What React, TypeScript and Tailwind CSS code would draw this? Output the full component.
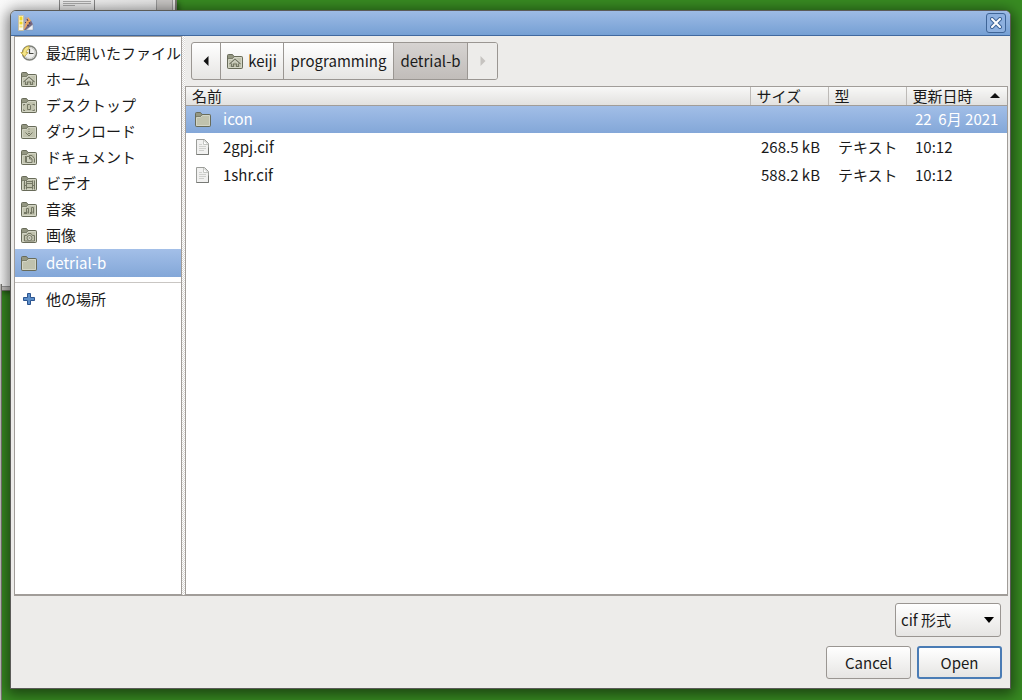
import type { ReactNode } from "react";

const btnCls =
  "flex items-center justify-center rounded-[3px] border border-[#9a9692] bg-linear-to-b from-white to-[#e6e5e3]";

const headCls =
  "border-b border-[#a19d99] bg-linear-to-b from-[#f8f8f7] to-[#e2e1df] p-0 text-left font-normal";

function Folder({ children }: { children?: ReactNode }) {
  return (
    <svg width="18" height="18" viewBox="0 0 18 18" fill="none" className="shrink-0">
      <path
        d="M1.5 15.5v-12a1 1 0 0 1 1-1h4l1.5 2h7.5a1 1 0 0 1 1 1v10a1 1 0 0 1-1 1h-13a1 1 0 0 1-1-1z"
        fill="#949782"
        stroke="#686b59"
      />
      <path d="M2.5 15.5v-8h4l2-2h7v10z" fill="#c0c2ad" stroke="#d3d5c5" />
      <path d="M2 6.5h4.5l1.5-2" stroke="#7b7e6a" />
      {children}
    </svg>
  );
}

const line = { stroke: "#747764", strokeWidth: 1 };

function HomeFolder() {
  return (
    <Folder>
      <path d="m4 12 5-5 5 5" stroke="#dfe0d4" strokeWidth="2.5" />
      <path d="m3.5 12 5.5-5 5.5 5M5.5 11.5v3h2v-2.5h3v2.5h2v-3" {...line} strokeWidth="1.2" />
    </Folder>
  );
}

function Clock() {
  return (
    <svg width="18" height="18" viewBox="0 0 18 18" fill="none" className="shrink-0">
      <circle cx="9.5" cy="9" r="7" fill="#f0f0ee" stroke="#7e807a" strokeWidth="1.5" />
      <circle cx="9.5" cy="9" r="5.5" stroke="#cbccc7" />
      <path d="M9.5 5v4.5h4" stroke="#454741" strokeWidth="1.2" />
      <path
        d="M.8 8.5l3.7 4L8 8.500H6.2C6.2 7 7 5.800 9 5V2C5.500 2.500 3 5 2.800 8.500z"
        fill="#f5e588"
        stroke="#b7a03a"
        strokeWidth="0.8"
      />
    </svg>
  );
}

function Plus() {
  return (
    <svg width="18" height="18" viewBox="0 0 18 18" className="shrink-0">
      <path
        d="M7.5 3.5h3v4h4v3h-4v4h-3v-4h-4v-3h4z"
        fill="#5d8fc9"
        stroke="#2c5590"
        strokeLinejoin="round"
      />
    </svg>
  );
}

function TextFile() {
  return (
    <svg width="18" height="18" viewBox="0 0 18 18" fill="none" className="shrink-0">
      <path d="M2.5 1.5h8l4 4v11h-12z" fill="#f1f1f0" stroke="#9b9d99" strokeLinejoin="round" />
      <path d="M2.5 16.500h12v-7" stroke="#777975" />
      <path d="M9.5 2v4.5H14z" fill="#fff" stroke="#c4c6c2" />
      <path d="M5 6.5h3M5 8.500h7M5 10.500h7M5 12.500h5" stroke="#cfd0cd" />
    </svg>
  );
}

function AppIcon() {
  return (
    <svg width="18" height="18" viewBox="0 0 18 18">
      <path d="M6 16 8 3l3.5 1L7 16z" fill="#a9a2b5" />
      <path d="m6.5 16 4.5-13 3 3.500L8 16z" fill="#eda65c" />
      <path d="m7 16 7-9.500 2 4L9 16z" fill="#77677f" />
      <path d="m9 16 7-5.500V16z" fill="#f1f2f5" stroke="#8891a0" strokeWidth="0.5" />
      <path d="M1.5 1.5h5v15h-5z" fill="#fbf9ee" stroke="#c9c0a2" />
      <path d="M2.5 2.500h3v4h-3zM2.500 7.500h3v3h-3z" fill="#f2d726" />
      <path d="M2.5 11.500h3v2h-3z" fill="#f5e27a" />
      <path d="m10 5 1 2M8 8l1 1M12 8l1 2M10 11l2 1" stroke="#4a3a52" />
    </svg>
  );
}

const places = [
  { name: "最近開いたファイル", icon: <Clock /> },
  { name: "ホーム", icon: <HomeFolder /> },
  {
    name: "デスクトップ",
    icon: (
      <Folder>
        <path
          d="M3.5 9.5v-1H5M12.5 8.500h2v1M3.500 13.500v1H5M12.500 14.500h2v-1M7.500 8.500h2l1 1v4h-3z"
          {...line}
        />
      </Folder>
    ),
  },
  {
    name: "ダウンロード",
    icon: (
      <Folder>
        <path d="M8.5 7h1M8.500 9.500h1M5.500 10.500 9 14l3.500-3.500M8 11l1 1 1-1" {...line} />
      </Folder>
    ),
  },
  {
    name: "ドキュメント",
    icon: (
      <Folder>
        <path d="M5.5 14.500v-6.500M9 7.500h3l2.500 3v4" {...line} />
        <path d="M6.5 8.500h3l2.500 2.500v3.500H6.500zM9.500 8.500v2.500H12" fill="#d0d2c1" {...line} />
      </Folder>
    ),
  },
  {
    name: "ビデオ",
    icon: (
      <Folder>
        <path d="M4.5 6.500v9M14.500 6.500v9M6.500 6.500v9M12.500 6.500v9" {...line} />
        <path d="M6.5 7.500h6M6.500 9.500h6M6.500 13.500h6M4.500 11.500h2M12.500 11.500h2" {...line} />
      </Folder>
    ),
  },
  {
    name: "音楽",
    icon: (
      <Folder>
        <path d="M6.5 13V8.500h2V12M11.500 13V7.500h2V12" {...line} />
        <path d="M4 12h3v2H4zM7.500 11.500h1.500v2H7.500zM10 12h2v2h-2zM12.500 11.500H14v2h-1.500z" fill="#747764" />
      </Folder>
    ),
  },
  {
    name: "画像",
    icon: (
      <Folder>
        <path d="M4.5 9.500h2l1.500-2h3l1.500 2h2v5.500h-10z" {...line} />
        <circle cx="9.5" cy="12" r="2.500" fill="#d9dacd" {...line} />
        <circle cx="9.5" cy="12" r="1" fill="#9fa28d" />
      </Folder>
    ),
  },
];

const files = [
  { name: "icon", size: "", type: "", date: "22  6月 2021", folder: true },
  { name: "2gpj.cif", size: "268.5 kB", type: "テキスト", date: "10:12", folder: false },
  { name: "1shr.cif", size: "588.2 kB", type: "テキスト", date: "10:12", folder: false },
];

function Place({ name, icon }: { name: string; icon: ReactNode }) {
  return (
    <button className="flex h-[26px] w-full items-center gap-2 overflow-hidden pl-[5px] whitespace-nowrap">
      {icon}
      {name}
    </button>
  );
}

function Sidebar() {
  return (
    <nav className="w-[168px] shrink-0 border border-[#a19d99] bg-white pt-[3px]">
      {places.map((p) => (
        <Place key={p.name} {...p} />
      ))}
      <button className="mt-px flex h-7 w-full items-center gap-2 bg-linear-to-b from-[#a3bfe8] to-[#83a7d8] pl-[5px] text-white">
        <Folder />
        detrial-b
      </button>
      <hr className="mt-[5px] mb-[3px] border-[#c9c6c3]" />
      <Place name="他の場所" icon={<Plus />} />
    </nav>
  );
}

function PathBar() {
  const seg = "flex items-center justify-center border-l border-[#9a9692]";
  return (
    <div className="my-[6px] ml-[6px] flex h-[38px] w-fit overflow-hidden rounded-[3px] border border-[#9a9692] bg-linear-to-b from-white to-[#e6e5e3]">
      <button aria-label="Back" className="flex w-[28px] items-center justify-center">
        <svg width="6" height="10" viewBox="0 0 6 10">
          <path d="M5.5 0v10l-5-5z" fill="#111" />
        </svg>
      </button>
      <button className={`${seg} w-[63px] gap-1 pr-px`}>
        <HomeFolder />
        keiji
      </button>
      <button className={`${seg} w-[110px]`}>programming</button>
      <button className={`${seg} w-[74px] bg-linear-to-b from-[#d6d3d1] to-[#c1bdba]`}>
        detrial-b
      </button>
      <button aria-label="Forward" disabled className={`${seg} w-[30px] bg-[#edecea]`}>
        <svg width="6" height="10" viewBox="0 0 6 10">
          <path d="M.5 0v10l5-5z" fill="#c6c3c0" />
        </svg>
      </button>
    </div>
  );
}

function FileTable() {
  return (
    <div className="flex-1 border border-[#a19d99] bg-white">
      <table className="w-full table-fixed border-collapse">
        <colgroup>
          <col />
          <col className="w-[78px]" />
          <col className="w-[78px]" />
          <col className="w-[101px]" />
        </colgroup>
        <thead>
          <tr className="h-[18px] leading-[17px]">
            <th className={`${headCls} pl-[6px]`}>名前</th>
            <th className={`${headCls} border-l border-l-[#bdbab7] pl-[6px]`}>サイズ</th>
            <th className={`${headCls} border-l border-l-[#bdbab7] pl-[6px]`}>型</th>
            <th className={`${headCls} border-l border-l-[#bdbab7] pl-[6px]`}>
              <div className="flex items-center justify-between pr-[7px]">
                更新日時
                <svg width="10" height="5" viewBox="0 0 10 5">
                  <path d="M0 5h10L5 0z" fill="#111" />
                </svg>
              </div>
            </th>
          </tr>
        </thead>
        <tbody>
          {files.map((f) => (
            <tr
              key={f.name}
              className={`h-7 whitespace-pre ${f.folder ? "bg-linear-to-b from-[#a3bfe8] to-[#83a7d8] text-white" : ""}`}
            >
              <td className="p-0 pl-2">
                <div className="flex items-center gap-[11px]">
                  {f.folder ? <Folder /> : <TextFile />}
                  {f.name}
                </div>
              </td>
              <td className="p-0 pr-[8px] text-right">{f.size}</td>
              <td className="p-0 pl-[10px]">{f.type}</td>
              <td className="p-0 pl-[9px]">{f.date}</td>
            </tr>
          ))}
        </tbody>
      </table>
    </div>
  );
}

// Edges of the windows that lie behind the dialog.
function BackWindows() {
  return (
    <>
      <div className="absolute top-0 left-0 h-[291px] w-[177px] border-r-2 border-b border-[#77766f] bg-linear-to-r from-[#fafafa] to-[#e2e2e2] shadow-[2px_2px_5px_rgba(0,0,0,0.4)]">
        <div className="ml-[59px] flex h-3 w-[36px] flex-col gap-px border-x border-[#888] bg-[#eee] px-[3px] pt-px">
          <div className="h-px bg-[#aaa]" />
          <div className="h-px bg-[#aaa]" />
          <div className="h-px w-3 bg-[#aaa]" />
        </div>
        <div className="absolute top-0 right-[2px] h-3 w-[17px] border-x border-[#999] bg-[#c8c6c4]" />
        <div className="absolute bottom-0 left-0 h-[4px] w-3 border-t border-[#999] bg-[#c8c6c4]" />
      </div>
      <div className="absolute top-[284px] bottom-0 left-0 w-[2px] border-r border-[#77766f] bg-[#c4c2c0]" />
    </>
  );
}

export default function App() {
  return (
    <div className="relative flex min-h-screen bg-[#388b22] pt-[10px] pr-[11px] pb-[11px] pl-[10px] font-['Noto_Sans_CJK_JP','Noto_Sans',sans-serif] text-[15px] leading-5 text-[#1a1a1a]">
      <BackWindows />
      <div className="relative flex flex-1 flex-col rounded-t-[6px] border border-[#5b5b58] bg-[#edecea] shadow-[0_3px_14px_3px_rgba(0,0,0,0.5)]">
        <header className="flex h-[25px] items-center justify-between rounded-t-[5px] border-b border-[#41699f] bg-linear-to-b from-[#9dbbe5] to-[#76a0d4] pr-[4px] pl-[6px]">
          <AppIcon />
          <button
            aria-label="Close"
            className="flex size-5 items-center justify-center rounded-[3px] border border-[#3f6597] bg-[#8db0df]"
          >
            <svg width="12" height="12" viewBox="0 0 12 12">
              <path d="m2 2 8 8M10 2l-8 8" stroke="#3f6597" strokeWidth="4" strokeLinecap="round" />
              <path d="m2 2 8 8M10 2l-8 8" stroke="#fff" strokeWidth="2" strokeLinecap="round" />
            </svg>
          </button>
        </header>
        <main className="mr-[2px] ml-[3px] flex flex-1 border-b border-[#a19d99]">
          <Sidebar />
          <div className="w-[3px] bg-[#e4e3e0] bg-[repeating-conic-gradient(#fff_0_25%,#dad8d5_0_50%)] bg-size-[2px_2px]" />
          <div className="flex min-w-0 flex-1 flex-col">
            <PathBar />
            <FileTable />
          </div>
        </main>
        <footer className="flex flex-col items-end gap-[9px] pt-[7px] pr-[8px] pb-[9px]">
          <div className="relative mr-px">
            <select
              aria-label="File type"
              className={`${btnCls} h-[34px] w-[106px] appearance-none pl-[5px]`}
            >
              <option>cif 形式</option>
            </select>
            <svg
              width="10"
              height="6"
              viewBox="0 0 10 6"
              className="pointer-events-none absolute top-[14px] right-[7px]"
            >
              <path d="M0 0h10L5 6z" fill="#000" />
            </svg>
          </div>
          <div className="flex gap-[6px]">
            <button className={`${btnCls} h-[33px] w-[85px]`}>Cancel</button>
            <button className="flex h-[33px] w-[85px] items-center justify-center rounded-[3px] border-2 border-[#4a7cb5] bg-linear-to-b from-white to-[#e6e5e3]">
              Open
            </button>
          </div>
        </footer>
      </div>
    </div>
  );
}
